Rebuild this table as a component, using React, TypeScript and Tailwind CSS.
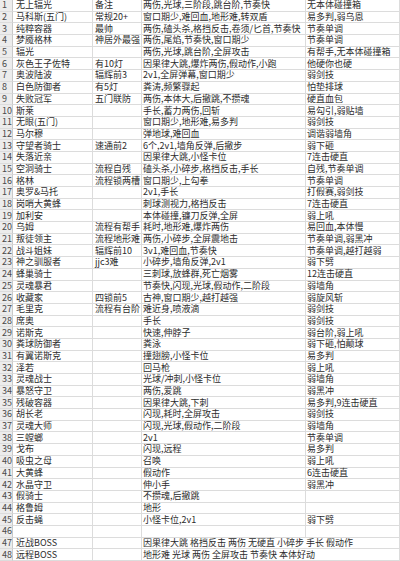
type Row = [string, string, string, string];

const rows: Row[] = [
	["无上辐光", "备注", "两伤,光球,三阶段,跳台阶,节奏快", "无本体碰撞箱"],
	["马科斯(五门)", "常规20+", "窗口期少,难回血,地形难,转双盾", "易多判,弱乌恩"],
	["纯粹容器", "最帅", "两伤,磕头杀,格挡反击,卷须/匕首,节奏快", "节奏单调"],
	["梦魇格林", "神居外最强", "两伤,尾焰,节奏快,窗口期少", "节奏单调"],
	["辐光", "", "两伤,光球,跳台阶,全屏攻击", "有帮手,无本体碰撞箱"],
	["灰色王子佐特", "有10灯", "因果律大跳,爆炸两伤,假动作,小跑", "他硬你也硬"],
	["奥波陆波", "辐辉前3", "2v1,全屏弹幕,窗口期少", "弱剑技"],
	["白色防御者", "有5灯", "粪涛,频繁骤起", "怕垫排球"],
	["失败冠军", "五门联防", "两伤,本体大,后撤跳,不攒魂", "硬直血包"],
	["斯莱", "", "手长,蓄力两伤,回斩", "易勾引,弱贴墙"],
	["无眼(五门)", "", "窗口期少,地形难,易多判", "弱剑技"],
	["马尔穆", "", "弹地球,难回血", "调谐弱墙角"],
	["守望者骑士", "速通前2", "6个,2v1,墙角反弹,后撤步", "弱下砸"],
	["失落近亲", "", "因果律大跳,小怪卡位", "7连击硬直"],
	["空洞骑士", "流程自残", "磕头杀,小碎步,格挡反击,手长", "自残,节奏单调"],
	["格林", "流程锁两槽", "窗口期少,上勾拳", "节奏单调"],
	["奥罗&马托", "", "2v1,手长", "打假赛,弱剑技"],
	["岗哨大黄蜂", "", "刺球测视力,格挡反击", "7连击硬直"],
	["加利安", "", "本体碰撞,镰刀反弹,全屏", "弱上吼"],
	["乌姆", "流程有帮手", "耗时,地形难,爆炸两伤", "易回血,本体慢"],
	["叛徒领主", "流程地形难", "两伤,小碎步,全屏震地击", "节奏单调,弱黑冲"],
	["战斗姐妹", "辐辉前10", "3v1,难回血,节奏快", "节奏单调,越打越弱"],
	["神之驯服者", "jjc3难", "小碎步,墙角反弹,2v1", "弱下劈"],
	["蜂巢骑士", "", "三刺球,放蜂群,死亡烟雾", "12连击硬直"],
	["灵魂暴君", "", "节奏快,闪现,光球,假动作,二阶段", "弱墙角"],
	["收藏家", "四锁前5", "古神,窗口期少,越打越强", "弱旋风斩"],
	["毛里克", "流程有台阶", "难近身,喷液滴", "弱剑技"],
	["席奥", "", "手长", "弱剑技"],
	["诺斯克", "", "快速,伸脖子", "弱台阶,弱上吼"],
	["粪球防御者", "", "粪泳", "弱下砸,怕颠球"],
	["有翼诺斯克", "", "撞翅膀,小怪卡位", "易多判"],
	["泽若", "", "回马枪", "弱上吼"],
	["灵魂战士", "", "光球/冲刺,小怪卡位", "弱墙角"],
	["暴怒守卫", "", "两伤,爱跳", "弱黑冲"],
	["残破容器", "", "因果律大跳,下刺", "易多判,9连击硬直"],
	["胡长老", "", "闪现,耗时,全屏攻击", "弱剑技"],
	["灵魂大师", "", "闪现,光球,假动作,二阶段", "弱墙角"],
	["三螳螂", "", "2v1", "节奏单调"],
	["戈布", "", "闪现,远程", "易多判"],
	["吸虫之母", "", "召唤", "弱上吼"],
	["大黄蜂", "", "假动作", "6连击硬直"],
	["水晶守卫", "", "伸小手", "弱黑冲"],
	["假骑士", "", "不攒魂,后撤跳", ""],
	["格鲁姆", "", "地形", ""],
	["反击蝇", "", "小怪卡位,2v1", "弱下劈"],
	["", "", "", ""],
];

const summary: [string, string][] = [
	["近战BOSS", "因果律大跳 格挡反击 两伤 无硬直 小碎步 手长 假动作"],
	["远程BOSS", "地形难 光球 两伤 全屏攻击 节奏快 本体好动"],
];

const cell =
	"flex min-w-0 items-center whitespace-nowrap border-b border-r border-[#dcdcdc] px-[2px] leading-[10px]";
const num = `${cell} bg-[#ececec] pl-[2px] text-[9px] text-[#4a4a4a] border-r-[#c9c9c9]`;

export default function App() {
	return (
		<div
			className="grid h-[561px] w-[400px] grid-cols-[13px_80px_49px_164px_1fr] grid-rows-[repeat(48,minmax(0,1fr))] bg-white text-[9px] text-[#2c2c2c]"
			style={{ fontFamily: '"Noto Sans CJK SC", "Noto Sans", sans-serif' }}
		>
			{rows.map((row, i) => (
				<div key={i} className="contents">
					<div className={num}>{i + 1}</div>
					<div className={`${cell} pl-[3px]`}>{row[0]}</div>
					<div className={cell}>{row[1]}</div>
					<div className={`${cell} pl-[1px]`}>{row[2]}</div>
					<div className={`${cell} pl-[1px]`}>{row[3]}</div>
				</div>
			))}
			{summary.map((row, i) => (
				<div key={row[0]} className="contents">
					<div className={num}>{rows.length + i + 1}</div>
					<div className={`${cell} pl-[3px]`}>{row[0]}</div>
					<div className={cell} />
					<div className={`${cell} col-span-2 pl-[1px]`}>{row[1]}</div>
				</div>
			))}
		</div>
	);
}
